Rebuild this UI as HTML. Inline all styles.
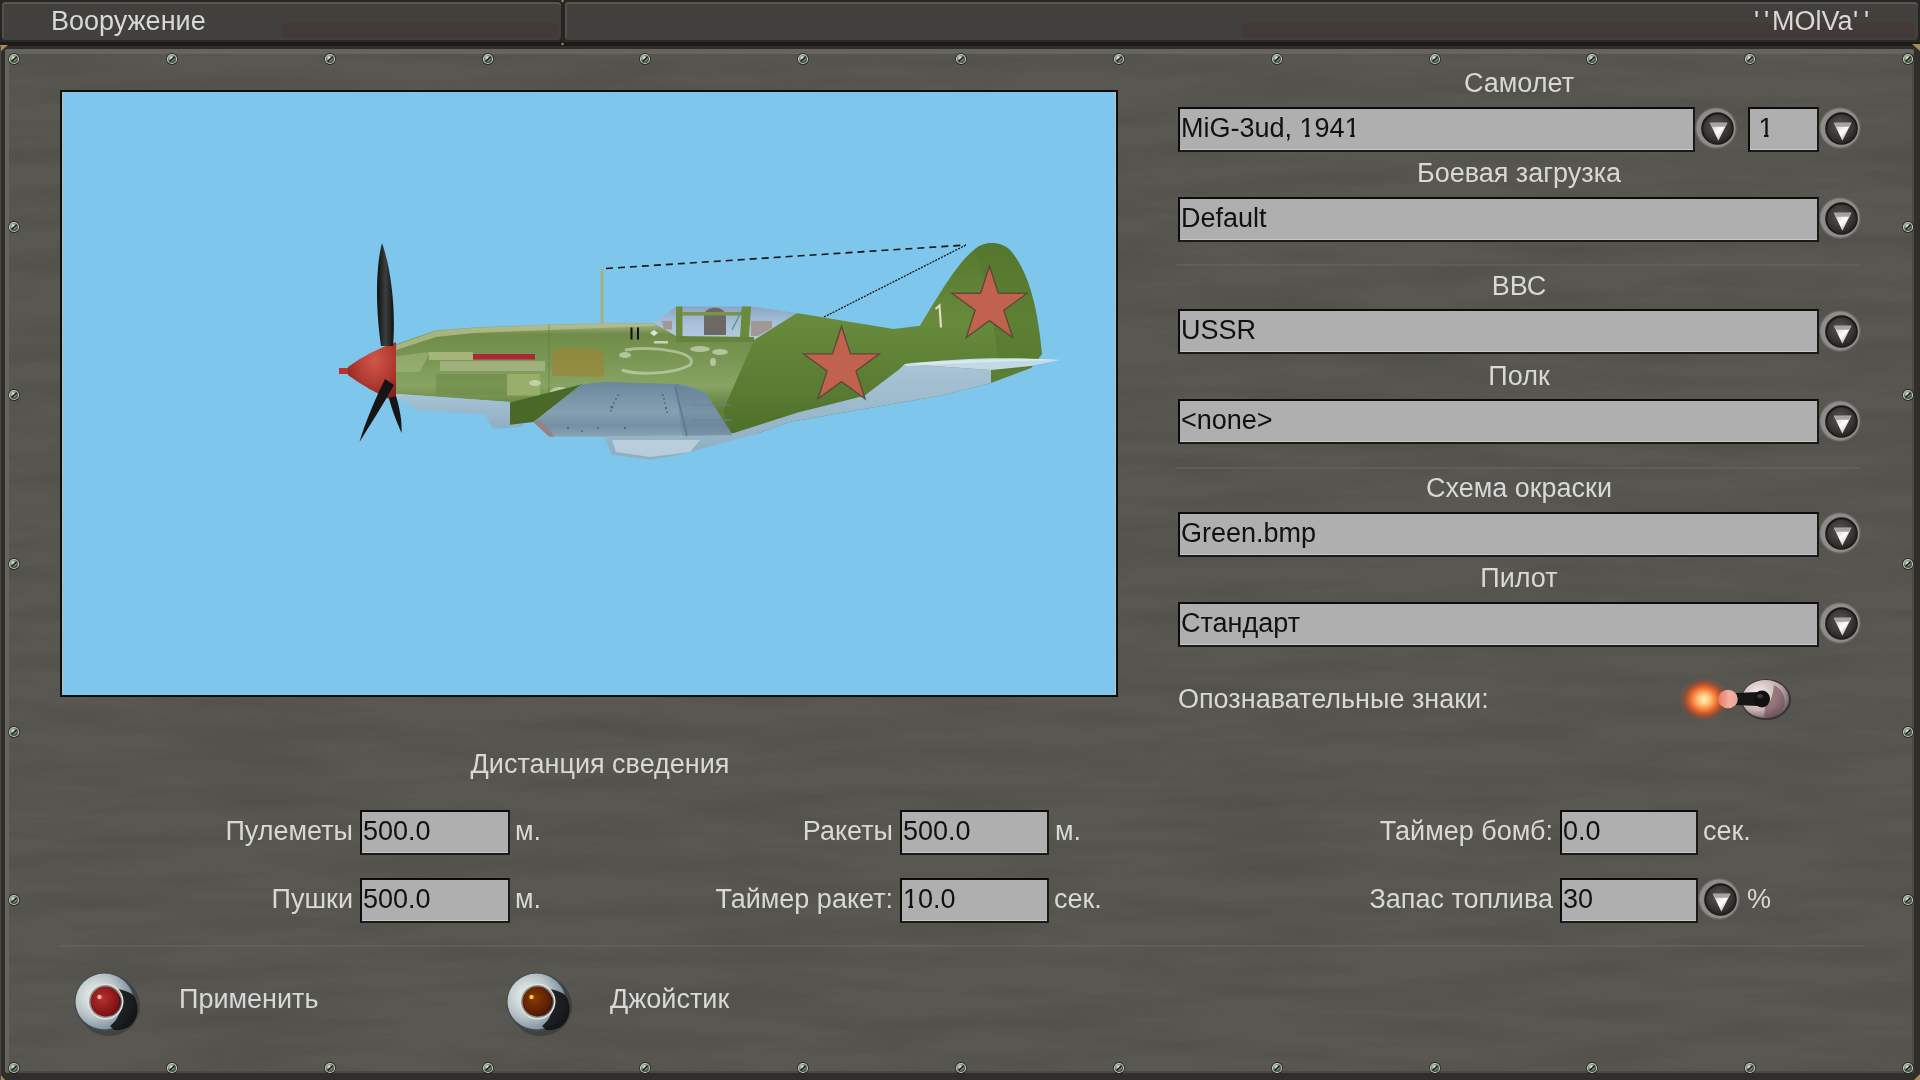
<!DOCTYPE html><html><head><meta charset='utf-8'><style>
*{margin:0;padding:0;box-sizing:border-box}
html,body{width:1920px;height:1080px;overflow:hidden;background:#2e2c29;font-family:"Liberation Sans", sans-serif}
.a{position:absolute}
.lbl{position:absolute;color:#d8d8d6;font-size:27px;line-height:1;white-space:nowrap;will-change:transform}
.inp{position:absolute;background:#afafaf;border-top:2px solid #0c0c0c;border-left:2px solid #0c0c0c;border-right:2px solid #1a1a1a;border-bottom:2px solid #1a1a1a;box-shadow:inset 0 -1px 0 #c6c6c6}
.inp>span{position:absolute;left:0.5px;color:#111;font-size:27px;line-height:1;white-space:nowrap;will-change:transform}
.one{display:inline-block;clip-path:polygon(0 0,100% 0,100% 20px,10px 20px,10px 100%,5.5px 100%,5.5px 20px,0 20px)}
.sep{position:absolute;height:2px;background:linear-gradient(#4e4c48,#66645f)}
</style></head><body>
<svg width="0" height="0" style="position:absolute">
<defs>
<radialGradient id="gScrew" cx="40%" cy="35%" r="70%"><stop offset="0" stop-color="#f0f4ec"/><stop offset="0.4" stop-color="#8e9c86"/><stop offset="1" stop-color="#2c3628"/></radialGradient>
<radialGradient id="gBtnIn" cx="45%" cy="40%" r="65%"><stop offset="0" stop-color="#5a5653"/><stop offset="0.7" stop-color="#353230"/><stop offset="1" stop-color="#1e1c1b"/></radialGradient>
<linearGradient id="gTri" x1="0" y1="0" x2="1" y2="1"><stop offset="0" stop-color="#bdbdbd"/><stop offset="0.5" stop-color="#ffffff"/><stop offset="1" stop-color="#8a8a8a"/></linearGradient>
<symbol id="screw" viewBox="-7 -7 14 14">
<circle r="5.9" fill="#1c1c1a" opacity="0.85"/>
<circle r="5.1" fill="#c4ccc0"/>
<circle r="4.0" fill="url(#gScrew)"/>
<path d="M-2.4 2.4 L2.6 -2.2" stroke="#0c160a" stroke-width="1.3"/>
</symbol>
<symbol id="drop" viewBox="-21 -21 42 42">
<circle r="20.8" fill="#6a6965"/>
<circle r="19.6" fill="#8d8c88"/>

<circle cx="1.5" cy="0.5" r="16.3" fill="#1c1a19"/>
<circle cx="1.8" cy="1" r="14.6" fill="url(#gBtnIn)"/>
<path d="M-6.2 -5.2 L11.4 -5.2 L2.4 12.8 Z" fill="url(#gTri)"/>
<path d="M-6.2 -5.2 L11.4 -5.2 L9.4 -1.2 L-4.2 -1.2Z" fill="#a4a4a4"/>
</symbol>
</defs></svg>
<div class="a" style="left:0;top:0;width:1920px;height:50px;background:#262522"></div>
<div class="a" style="left:2px;top:2px;width:559px;height:40px;border-radius:4px;background:#42403c;box-shadow:inset 0 2px 0 #56574f, inset 0 -2px 0 #2a2926, inset 2px 0 0 #52504b"></div>
<div class="a" style="left:282px;top:23px;width:276px;height:15px;background:#443734;opacity:0.75"></div>
<div class="a" style="left:565px;top:2px;width:1353px;height:40px;border-radius:4px;background:#42403c;box-shadow:inset 0 2px 0 #56574f, inset 0 -2px 0 #2a2926, inset 2px 0 0 #52504b"></div>
<div class="a" style="left:1242px;top:23px;width:673px;height:15px;background:#443734;opacity:0.75"></div>
<div class="a" style="left:0;top:42px;width:1920px;height:4px;background:#1c1b19"></div>
<div class="lbl" style="left:51px;top:7.6px">Вооружение</div>
<div class="lbl" style="left:1754px;top:7.6px">'</div><div class="lbl" style="left:1764px;top:7.6px">'</div><div class="lbl" style="left:1772px;top:7.6px">MOlVa</div><div class="lbl" style="left:1853px;top:7.6px">'</div><div class="lbl" style="left:1864px;top:7.6px">'</div>
<div class="a" style="left:0;top:46px;width:1920px;height:1034px;background:#302e2b"></div>
<div class="a" style="left:5px;top:49px;width:1909px;height:1024px;background:#585751;box-shadow:inset 4px 5px 0 #66645f, inset -2px -2px 0 #4a4944;border-radius:3px"></div>
<svg class="a" style="left:0;top:0" width="1920" height="1080"><g fill="#a88c58">
<path d="M0 45 L8 45 L0 52Z"/><path d="M1920 44 L1912 44 L1920 51Z"/><path d="M0 1074 L5 1080 L0 1080Z"/><path d="M1920 1074 L1914 1080 L1920 1080Z"/>
<circle cx="562.5" cy="1" r="1.2"/><circle cx="562.5" cy="44" r="1.2"/></g></svg>
<svg class="a" style="left:9px;top:54px" width="1903" height="1017"><filter id="tex" x="0" y="0" width="100%" height="100%" color-interpolation-filters="sRGB"><feTurbulence type="fractalNoise" baseFrequency="0.006 0.045" numOctaves="4" seed="11"/><feColorMatrix values="0 0 0 0 0.2  0 0 0 0 0.2  0 0 0 0 0.19  1.1 0 0 0 -0.45"/></filter><rect width="1903" height="1017" filter="url(#tex)" opacity="0.35"/></svg>
<div class="a" style="left:0;top:46px;width:1px;height:1034px;background:#4a4944"></div>
<svg class="a" style="left:7.0px;top:52.0px" width="14" height="14"><use href="#screw"/></svg>
<svg class="a" style="left:7.0px;top:1061.0px" width="14" height="14"><use href="#screw"/></svg>
<svg class="a" style="left:164.8px;top:52.0px" width="14" height="14"><use href="#screw"/></svg>
<svg class="a" style="left:164.8px;top:1061.0px" width="14" height="14"><use href="#screw"/></svg>
<svg class="a" style="left:322.7px;top:52.0px" width="14" height="14"><use href="#screw"/></svg>
<svg class="a" style="left:322.7px;top:1061.0px" width="14" height="14"><use href="#screw"/></svg>
<svg class="a" style="left:480.5px;top:52.0px" width="14" height="14"><use href="#screw"/></svg>
<svg class="a" style="left:480.5px;top:1061.0px" width="14" height="14"><use href="#screw"/></svg>
<svg class="a" style="left:638.3px;top:52.0px" width="14" height="14"><use href="#screw"/></svg>
<svg class="a" style="left:638.3px;top:1061.0px" width="14" height="14"><use href="#screw"/></svg>
<svg class="a" style="left:796.2px;top:52.0px" width="14" height="14"><use href="#screw"/></svg>
<svg class="a" style="left:796.2px;top:1061.0px" width="14" height="14"><use href="#screw"/></svg>
<svg class="a" style="left:954.0px;top:52.0px" width="14" height="14"><use href="#screw"/></svg>
<svg class="a" style="left:954.0px;top:1061.0px" width="14" height="14"><use href="#screw"/></svg>
<svg class="a" style="left:1111.8px;top:52.0px" width="14" height="14"><use href="#screw"/></svg>
<svg class="a" style="left:1111.8px;top:1061.0px" width="14" height="14"><use href="#screw"/></svg>
<svg class="a" style="left:1269.6px;top:52.0px" width="14" height="14"><use href="#screw"/></svg>
<svg class="a" style="left:1269.6px;top:1061.0px" width="14" height="14"><use href="#screw"/></svg>
<svg class="a" style="left:1427.5px;top:52.0px" width="14" height="14"><use href="#screw"/></svg>
<svg class="a" style="left:1427.5px;top:1061.0px" width="14" height="14"><use href="#screw"/></svg>
<svg class="a" style="left:1585.3px;top:52.0px" width="14" height="14"><use href="#screw"/></svg>
<svg class="a" style="left:1585.3px;top:1061.0px" width="14" height="14"><use href="#screw"/></svg>
<svg class="a" style="left:1743.1px;top:52.0px" width="14" height="14"><use href="#screw"/></svg>
<svg class="a" style="left:1743.1px;top:1061.0px" width="14" height="14"><use href="#screw"/></svg>
<svg class="a" style="left:1901.0px;top:52.0px" width="14" height="14"><use href="#screw"/></svg>
<svg class="a" style="left:1901.0px;top:1061.0px" width="14" height="14"><use href="#screw"/></svg>
<svg class="a" style="left:7.0px;top:220.2px" width="14" height="14"><use href="#screw"/></svg>
<svg class="a" style="left:1901.0px;top:220.2px" width="14" height="14"><use href="#screw"/></svg>
<svg class="a" style="left:7.0px;top:388.3px" width="14" height="14"><use href="#screw"/></svg>
<svg class="a" style="left:1901.0px;top:388.3px" width="14" height="14"><use href="#screw"/></svg>
<svg class="a" style="left:7.0px;top:556.5px" width="14" height="14"><use href="#screw"/></svg>
<svg class="a" style="left:1901.0px;top:556.5px" width="14" height="14"><use href="#screw"/></svg>
<svg class="a" style="left:7.0px;top:724.7px" width="14" height="14"><use href="#screw"/></svg>
<svg class="a" style="left:1901.0px;top:724.7px" width="14" height="14"><use href="#screw"/></svg>
<svg class="a" style="left:7.0px;top:892.8px" width="14" height="14"><use href="#screw"/></svg>
<svg class="a" style="left:1901.0px;top:892.8px" width="14" height="14"><use href="#screw"/></svg>
<div class="a" style="left:60px;top:90px;width:1058px;height:607px;background:#0d0d0c"></div>
<div class="a" style="left:62px;top:92px;width:1054px;height:603px;background:#7ec6eb;box-shadow:inset 1px 0 0 #c0bcb0, inset -1px 0 0 #c8c4b8"></div>
<div class="lbl" style="left:1018.5px;width:1000px;text-align:center;top:69.9px">Самолет</div>
<div class="inp" style="left:1178px;top:107px;width:517px;height:45px"><span style="top:5.8px">MiG-3ud, <span class="one">1</span>94<span class="one">1</span></span></div>
<svg class="a" style="left:1695px;top:107px" width="42" height="42"><use href="#drop"/></svg>
<div class="inp" style="left:1748px;top:107px;width:71px;height:45px"><span style="top:5.8px">&nbsp;<span class="one">1</span></span></div>
<svg class="a" style="left:1819px;top:107px" width="42" height="42"><use href="#drop"/></svg>
<div class="lbl" style="left:1018.5px;width:1000px;text-align:center;top:160.0px">Боевая загрузка</div>
<div class="inp" style="left:1178px;top:197px;width:641px;height:45px"><span style="top:5.8px">Default</span></div>
<svg class="a" style="left:1819px;top:197px" width="42" height="42"><use href="#drop"/></svg>
<div class="a" style="left:1176px;top:264px;width:684px;height:2px;background:#66666a;opacity:0.55"></div>
<div class="lbl" style="left:1018.5px;width:1000px;text-align:center;top:272.9px">ВВС</div>
<div class="inp" style="left:1178px;top:309px;width:641px;height:45px"><span style="top:5.8px">USSR</span></div>
<svg class="a" style="left:1819px;top:310px" width="42" height="42"><use href="#drop"/></svg>
<div class="lbl" style="left:1018.5px;width:1000px;text-align:center;top:363.3px">Полк</div>
<div class="inp" style="left:1178px;top:399px;width:641px;height:45px"><span style="top:5.8px">&lt;none&gt;</span></div>
<svg class="a" style="left:1819px;top:400px" width="42" height="42"><use href="#drop"/></svg>
<div class="a" style="left:1176px;top:466.5px;width:684px;height:2px;background:#66666a;opacity:0.55"></div>
<div class="lbl" style="left:1018.5px;width:1000px;text-align:center;top:475.2px">Схема окраски</div>
<div class="inp" style="left:1178px;top:512px;width:641px;height:45px"><span style="top:5.8px">Green.bmp</span></div>
<svg class="a" style="left:1819px;top:512px" width="42" height="42"><use href="#drop"/></svg>
<div class="lbl" style="left:1018.5px;width:1000px;text-align:center;top:565.4px">Пилот</div>
<div class="inp" style="left:1178px;top:602px;width:641px;height:45px"><span style="top:5.8px">Стандарт</span></div>
<svg class="a" style="left:1819px;top:602px" width="42" height="42"><use href="#drop"/></svg>
<div class="lbl" style="left:1178px;top:686.1px">Опознавательные знаки:</div>
<div class="lbl" style="left:99.5px;width:1000px;text-align:center;top:751.1px">Дистанция сведения</div>
<div class="lbl" style="left:-247px;width:600px;text-align:right;top:817.9px">Пулеметы</div>
<div class="inp" style="left:360px;top:810px;width:150px;height:45px"><span style="top:5.8px">500.0</span></div>
<div class="lbl" style="left:515px;top:817.9px">м.</div>
<div class="lbl" style="left:-247px;width:600px;text-align:right;top:885.8px">Пушки</div>
<div class="inp" style="left:360px;top:878px;width:150px;height:45px"><span style="top:5.8px">500.0</span></div>
<div class="lbl" style="left:515px;top:885.8px">м.</div>
<div class="lbl" style="left:293px;width:600px;text-align:right;top:817.9px">Ракеты</div>
<div class="inp" style="left:900px;top:810px;width:149px;height:45px"><span style="top:5.8px">500.0</span></div>
<div class="lbl" style="left:1055px;top:817.9px">м.</div>
<div class="lbl" style="left:293px;width:600px;text-align:right;top:885.8px">Таймер ракет:</div>
<div class="inp" style="left:900px;top:878px;width:149px;height:45px"><span style="top:5.8px"><span class="one">1</span>0.0</span></div>
<div class="lbl" style="left:1054px;top:885.8px">сек.</div>
<div class="lbl" style="left:953px;width:600px;text-align:right;top:817.9px">Таймер бомб:</div>
<div class="inp" style="left:1560px;top:810px;width:138px;height:45px"><span style="top:5.8px">0.0</span></div>
<div class="lbl" style="left:1703px;top:817.9px">сек.</div>
<div class="lbl" style="left:953px;width:600px;text-align:right;top:885.8px">Запас топлива</div>
<div class="inp" style="left:1560px;top:878px;width:138px;height:45px"><span style="top:5.8px">30</span></div>
<svg class="a" style="left:1698px;top:878px" width="42" height="42"><use href="#drop"/></svg>
<div class="lbl" style="left:1747px;top:885.8px">%</div>
<div class="a" style="left:59px;top:945px;width:1805px;height:2px;background:#66666a;opacity:0.55"></div>
<div class="lbl" style="left:179px;top:986.1px">Применить</div>
<div class="lbl" style="left:610px;top:986.1px">Джойстик</div>
<svg class="a" style="left:69px;top:966px" width="76" height="76" viewBox="-36 -36 76 76">
<defs><radialGradient id="rb105" cx="35%" cy="40%" r="70%"><stop offset="0" stop-color="#f2f6f4"/><stop offset="0.55" stop-color="#b9c3c6"/><stop offset="1" stop-color="#6d8290"/></radialGradient>
<radialGradient id="rc105" cx="40%" cy="40%" r="60%"><stop offset="0" stop-color="#b8302e"/><stop offset="1" stop-color="#7a0e12"/></radialGradient></defs>
<ellipse cx="4" cy="4" rx="31" ry="30" fill="#2a2a2a" opacity="0.45"/>
<ellipse cx="0" cy="0" rx="30.5" ry="29.5" fill="#3e4a52"/>
<ellipse cx="-0.5" cy="-0.5" rx="29" ry="28" fill="url(#rb105)"/>
<path d="M13 -13 C19 -12 25 -10 29 -6 C33 1 34 10 30 18 C26 25 19 29 9 28 L5 24 C13 18 17 8 16 -2 C16 -7 15 -10 13 -13Z" fill="#121416" opacity="0.92"/>
<circle cx="0.5" cy="-0.5" r="18" fill="#dfe4e2"/>
<circle cx="0.5" cy="-0.5" r="16.5" fill="#8f9596"/>
<circle cx="0.5" cy="-0.5" r="15" fill="url(#rc105)"/>
<path d="M12 -8 A14 14 0 0 1 -2 14 L6 14 A15 15 0 0 0 16 -4Z" fill="#0e0e10" opacity="0.55"/>
<circle cx="-5.5" cy="-5" r="2.2" fill="#f0b8b8"/>
</svg>
<svg class="a" style="left:501px;top:966px" width="76" height="76" viewBox="-36 -36 76 76">
<defs><radialGradient id="rb537" cx="35%" cy="40%" r="70%"><stop offset="0" stop-color="#f2f6f4"/><stop offset="0.55" stop-color="#b9c3c6"/><stop offset="1" stop-color="#6d8290"/></radialGradient>
<radialGradient id="rc537" cx="40%" cy="40%" r="60%"><stop offset="0" stop-color="#8a3a06"/><stop offset="1" stop-color="#4e1a02"/></radialGradient></defs>
<ellipse cx="4" cy="4" rx="31" ry="30" fill="#2a2a2a" opacity="0.45"/>
<ellipse cx="0" cy="0" rx="30.5" ry="29.5" fill="#3e4a52"/>
<ellipse cx="-0.5" cy="-0.5" rx="29" ry="28" fill="url(#rb537)"/>
<path d="M13 -13 C19 -12 25 -10 29 -6 C33 1 34 10 30 18 C26 25 19 29 9 28 L5 24 C13 18 17 8 16 -2 C16 -7 15 -10 13 -13Z" fill="#121416" opacity="0.92"/>
<circle cx="0.5" cy="-0.5" r="18" fill="#dfe4e2"/>
<circle cx="0.5" cy="-0.5" r="16.5" fill="#8f9596"/>
<circle cx="0.5" cy="-0.5" r="15" fill="url(#rc537)"/>
<path d="M12 -8 A14 14 0 0 1 -2 14 L6 14 A15 15 0 0 0 16 -4Z" fill="#0e0e10" opacity="0.55"/>
<circle cx="-5.5" cy="-5" r="2.2" fill="#f7c83a"/>
</svg>
<svg class="a" style="left:1670px;top:670px" width="130" height="60" viewBox="1670 670 130 60">
<defs>
<radialGradient id="glow" cx="50%" cy="50%" r="50%"><stop offset="0" stop-color="#fff2c4"/><stop offset="0.22" stop-color="#ffc47a"/><stop offset="0.5" stop-color="#f06a2a"/><stop offset="0.75" stop-color="#b8482a" stop-opacity="0.45"/><stop offset="1" stop-color="#5a5854" stop-opacity="0"/></radialGradient>
<radialGradient id="base" cx="35%" cy="35%" r="75%"><stop offset="0" stop-color="#f4eeee"/><stop offset="0.6" stop-color="#c8b2b2"/><stop offset="1" stop-color="#5e5458"/></radialGradient>
<linearGradient id="knob" x1="0" y1="0" x2="1" y2="0"><stop offset="0" stop-color="#e87a60"/><stop offset="0.6" stop-color="#f2b0a4"/><stop offset="1" stop-color="#e6a49a"/></linearGradient>
</defs>
<ellipse cx="1704" cy="699.5" rx="27" ry="24" fill="url(#glow)"/>
<ellipse cx="1766" cy="699.5" rx="25" ry="20.5" fill="#3a3438"/>
<ellipse cx="1765.5" cy="699" rx="23.5" ry="19" fill="url(#base)"/>
<path d="M1774 685 C1784 690 1788 702 1782 711 C1777 717 1770 719 1764 718 L1765 707 C1771 703 1773 694 1774 685Z" fill="#6a4a52" opacity="0.6"/>
<path d="M1736 693 L1758 692 L1758 706 L1736 705 Z" fill="#161616"/>
<ellipse cx="1762" cy="699" rx="8" ry="8.5" fill="#101010"/>
<ellipse cx="1760" cy="696" rx="3" ry="2" fill="#3a3a3a"/>
<ellipse cx="1728" cy="699" rx="9.8" ry="9.2" fill="url(#knob)"/>
</svg>
<svg class="a" style="left:62px;top:92px" width="1054" height="603" viewBox="62 92 1054 603">
<defs>
<linearGradient id="gBody" x1="0" y1="0" x2="0" y2="1"><stop offset="0" stop-color="#a8b488"/><stop offset="0.1" stop-color="#6f8c48"/><stop offset="0.35" stop-color="#7c9856"/><stop offset="0.55" stop-color="#88a464"/><stop offset="0.75" stop-color="#62803c"/><stop offset="1" stop-color="#52702e"/></linearGradient>
<linearGradient id="gRear" x1="0" y1="0" x2="0" y2="1"><stop offset="0" stop-color="#55782e"/><stop offset="0.4" stop-color="#678a3c"/><stop offset="0.7" stop-color="#5c7e34"/><stop offset="1" stop-color="#4e6e28"/></linearGradient>
<linearGradient id="gFin" x1="0" y1="0" x2="1" y2="0"><stop offset="0" stop-color="#5e8234"/><stop offset="1" stop-color="#4f7229"/></linearGradient>
<linearGradient id="gWing" x1="0" y1="0" x2="0" y2="1"><stop offset="0" stop-color="#6a889c"/><stop offset="0.55" stop-color="#86a0b2"/><stop offset="0.8" stop-color="#7490a4"/><stop offset="1" stop-color="#8aa2b4"/></linearGradient>
<linearGradient id="gBelly" x1="0" y1="0" x2="0" y2="1"><stop offset="0" stop-color="#a8c4d6"/><stop offset="1" stop-color="#8eaec2"/></linearGradient>
<linearGradient id="gGlass" x1="0" y1="0" x2="0" y2="1"><stop offset="0" stop-color="#8aa4c2"/><stop offset="0.5" stop-color="#a8c0da"/><stop offset="1" stop-color="#b4cce0"/></linearGradient>
<radialGradient id="gSpin" cx="55%" cy="30%" r="75%"><stop offset="0" stop-color="#d05848"/><stop offset="0.55" stop-color="#b03a30"/><stop offset="1" stop-color="#7e1a16"/></radialGradient>
<linearGradient id="gProp" x1="0" y1="0" x2="1" y2="0"><stop offset="0" stop-color="#0e0e0e"/><stop offset="0.5" stop-color="#3c3e3e"/><stop offset="1" stop-color="#121212"/></linearGradient>
</defs>
<!-- antenna -->
<path d="M606 268.5 L966 245" stroke="#151515" stroke-width="1.6" stroke-dasharray="7 5" fill="none"/>
<path d="M824 317 L966 245" stroke="#151515" stroke-width="1.3" stroke-dasharray="2 1.2" fill="none"/>
<path d="M602 269 L602 324" stroke="#a8b070" stroke-width="2.6"/>
<!-- rear fuselage & fin -->
<path d="M740 330 L797.8 313.2 L893.6 329 L920 325.7 C940 293 958 262 975 249 C985 241 1000 241 1010 250 C1026 268 1037 300 1042 354 L1031 368 L991 383 L940 395.8 L789.4 422 L757 433.8 L733 437 L720 411 Z" fill="url(#gRear)"/>
<path d="M975 249 C985 241 1000 241 1010 250 C1026 268 1037 300 1042 354 L1031 368 L1000 372 L990 300Z" fill="#53762c" opacity="0.5"/>
<!-- front fuselage -->
<path d="M394.8 344.7 L435.5 330.4 L473.8 327.4 L549 324.4 L602 323.2 L654 323 L678 337 L754 340 L723 411 L733 437 L549 436 L524 403 L394.8 393.8 Z" fill="url(#gBody)"/>
<path d="M396 345 L435.5 331 L473.8 328 L549 325 L602 324 L654 324 L656 326 L549 330 L474 333 L436 337 L396 350Z" fill="#b8c090" opacity="0.75"/>
<path d="M396 372 L420 372 L430 352 L396 356Z" fill="#a8bc84" opacity="0.5"/>
<path d="M552 350 C570 346 590 348 604 352 L604 377 L552 376Z" fill="#a08434" opacity="0.6"/>
<path d="M429 352 L473 352 L473 360 L429 360Z" fill="#a6b47a"/>
<path d="M473 354 L535 354 L535 359.5 L473 359.5Z" fill="#a82a3a"/>
<path d="M440 361 L545 361 L545 371 L440 371Z" fill="#c8cca8" opacity="0.45"/>
<path d="M507 374 L540 374 L540 395.6 L507 395.6Z" fill="#9aae6c"/>
<path d="M436 374 L507 374 L507 395 L436 395Z" fill="#6e8a48" opacity="0.6"/>
<path d="M625 350 C655 346 700 352 690 365 C670 376 632 374 622 370" stroke="#d8e0c8" stroke-width="3" fill="none" opacity="0.55"/>
<path d="M549 324.4 L549 436" stroke="#5e7a3c" stroke-width="1" opacity="0.6"/>
<rect x="630.5" y="327.5" width="2" height="12" fill="#111"/><rect x="637" y="327.5" width="2" height="12" fill="#111"/>
<path d="M650 333 L654 330 L658 333 L654 336Z" fill="#e0e4d8"/>
<g fill="#e8ecdc" opacity="0.55"><ellipse cx="625" cy="355" rx="6" ry="3"/><ellipse cx="700" cy="349" rx="10" ry="3"/><ellipse cx="720" cy="352" rx="8" ry="3"/><ellipse cx="713" cy="362" rx="3" ry="4"/><ellipse cx="560" cy="392" rx="10" ry="5"/><ellipse cx="535" cy="383" rx="6" ry="3"/></g>
<rect x="654" y="341" width="14" height="2.5" fill="#dde2d2" opacity="0.8"/>
<!-- nose underside light blue -->
<path d="M394.8 393.8 L524 403 L522.6 426.7 L492.9 428.7 L485 414.4 L418.7 410.6 L397 398 Z" fill="url(#gBelly)"/>
<!-- rear belly + radiator -->
<path d="M549 436.4 L734 433 L797.8 412.5 L864.4 395.8 L899 369.4 L904.7 364 L991 370 L991 383 L940 395.8 L789.4 422 L757 433.8 L679 455 L650.6 459.8 L611.6 454.6 L603.7 436.4 Z" fill="url(#gBelly)"/>
<path d="M612 440 L700 440 L690 452 L650 457 L616 452Z" fill="#d8e6ee" opacity="0.55"/>
<!-- wing -->
<path d="M510 402.5 L583 384 L533.4 422 L510 424.7Z" fill="#4a6828"/>
<path d="M580 385.3 C592 382.5 600 382 609.6 381.9 L677.5 384 C690 386 700 389 706 393.3 L732.6 435 L549 436.4 L533.4 422 Z" fill="url(#gWing)"/>
<path d="M674 384 L706 393.3 L732.6 435 L683 436Z" fill="#5e7c92" opacity="0.35"/>
<g fill="#3e5466" opacity="0.7"><circle cx="618" cy="395" r="0.9"/><circle cx="616" cy="399" r="0.9"/><circle cx="614" cy="403" r="0.9"/><circle cx="612" cy="407" r="1.6"/><circle cx="611" cy="411" r="0.9"/><circle cx="663" cy="395" r="0.9"/><circle cx="664" cy="399" r="0.9"/><circle cx="665" cy="403" r="0.9"/><circle cx="666" cy="408" r="1.2"/><circle cx="667" cy="412" r="0.9"/><circle cx="568" cy="428" r="1.2"/><circle cx="582" cy="431" r="1"/><circle cx="598" cy="428" r="1"/><circle cx="625" cy="428" r="1.2"/></g>
<path d="M533.4 422 L549 436.4 L555 436.4 L540 420Z" fill="#9a8080"/>
<path d="M675 386 L687 436" stroke="#5a7488" stroke-width="1.2"/>
<path d="M690 405 L730 405 M692 420 L732 420" stroke="#6a8296" stroke-width="1"/>
<!-- stabilizer -->
<path d="M904.7 364 C960 358 1010 357 1060 360 L1031 366 L991 370 Z" fill="#c2dae6"/>
<path d="M904.7 364 C950 360 1000 359 1040 359 L1060 360 C1010 361 960 363 906 366Z" fill="#e4f0f4" opacity="0.7"/>
<!-- canopy -->
<path d="M654 323 L676 306.5 L751 306.5 L797 313 L754 340 L678 337 Z" fill="url(#gGlass)"/>
<path d="M661.7 321 L672 321 L672 329.6 L664 329.6Z M751 321 L772 321 L772 328 L758 336 L751 336Z" fill="#a09088" opacity="0.85"/>
<path d="M704 316 C704 309 712 307 718 308 C724 309 726 314 726 318 L726 335 L704 335Z" fill="#6e6864"/>
<path d="M676 306.5 L682.5 306.5 L682.5 338 L676 338Z" fill="#6a8a3c"/>
<path d="M682 312 L745 312 L745 315.5 L682 315.5Z" fill="#7a9448"/>
<path d="M742 306.5 L751 306.5 L749 337 L740 337Z" fill="#6a8a3c"/>
<path d="M732 330 L742 310" stroke="#4a9a80" stroke-width="1.2"/>
<path d="M676 336 L754 337 L754 342 L676 342Z" fill="#64843a"/>
<!-- stars -->
<polygon points="841.5,326.3 850.5,353.9 879.5,353.9 856.0,371.0 865.0,398.7 841.5,381.6 818.0,398.7 827.0,371.0 803.5,353.9 832.5,353.9" fill="#c0624e" stroke="#5e4a38" stroke-width="1.4"/>
<polygon points="989.5,266.0 998.4,293.3 1027.1,293.3 1003.9,310.2 1012.7,337.5 989.5,320.6 966.3,337.5 975.1,310.2 951.9,293.3 980.6,293.3" fill="#c0624e" stroke="#5e4a38" stroke-width="1.4"/>
<path d="M935.5 309 L939.5 305.5 L941 327.5" stroke="#e4dcc0" stroke-width="2.2" fill="none"/>
<!-- spinner -->
<rect x="339" y="368" width="12" height="6" fill="#b83232"/>
<path d="M348 367 Q368 352 396 342 L396 402 Q368 390 348 375 Z" fill="url(#gSpin)"/>
<!-- propeller -->
<path d="M382 243 C375 270 376 312 381 346 L393 346 C396 310 391 268 382 243 Z" fill="url(#gProp)"/>
<path d="M385 379 L394 385 C383 405 370 425 359.5 442 C366 420 375 400 385 379 Z" fill="#151515"/>
<path d="M389 398 L396 396 C400 410 402 420 401.5 433 C396 420 392 410 389 398 Z" fill="#151515"/>
</svg>
</body></html>
